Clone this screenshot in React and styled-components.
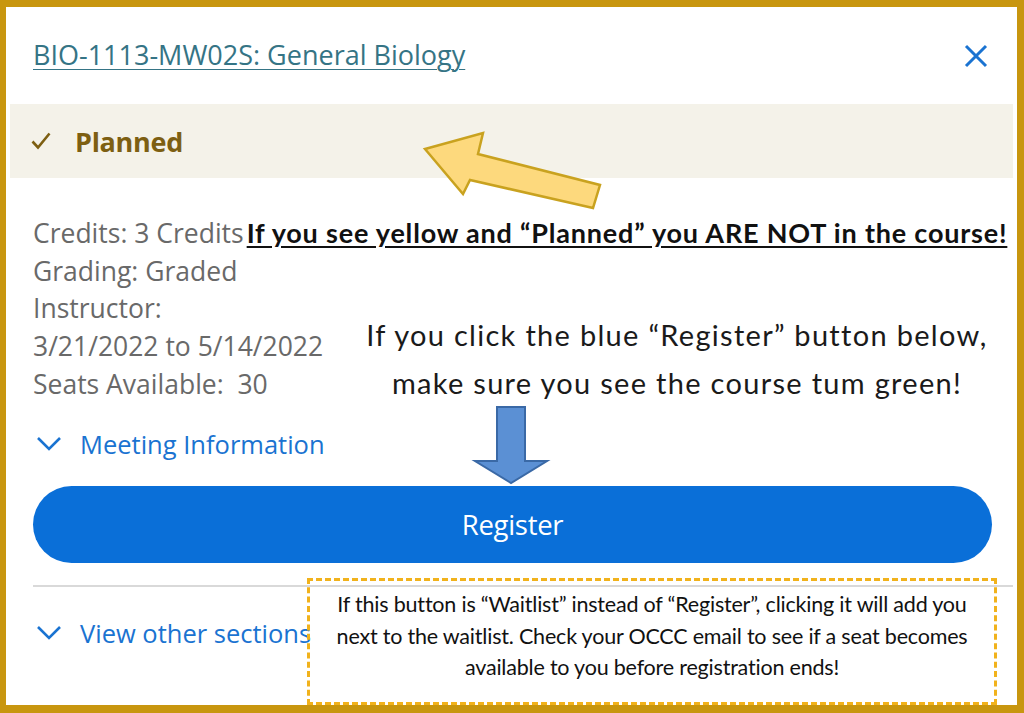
import React from 'react';
import styled, { createGlobalStyle } from 'styled-components';

const GlobalStyle = createGlobalStyle`
  * { box-sizing: border-box; }
  html, body { margin: 0; padding: 0; background: #ffffff; }
  body { font-family: 'Open Sans', 'Liberation Sans', sans-serif; }
`;

const gold = '#c8960f';
const blue = '#1a73d1';

const Frame = styled.div`
  position: relative;
  width: 1024px;
  height: 713px;
  border-style: solid;
  border-color: ${gold};
  border-width: 7px 7px 8px 6px;
  background: #ffffff;
  display: flex;
  flex-direction: column;
  overflow: hidden;
`;

const Header = styled.div`
  height: 97px;
  display: flex;
  align-items: center;
  justify-content: space-between;
  padding: 0 28px 0 27px;
`;

const Title = styled.a`
  font-size: 27px;
  color: #357485;
  text-decoration: underline;
  text-underline-offset: 4px;
  text-decoration-thickness: 1px;
  margin-top: -2px;
`;

const CloseButton = styled.button`
  border: none;
  background: none;
  padding: 0;
  width: 26px;
  height: 26px;
  display: flex;
  align-items: center;
  justify-content: center;
`;

const StatusBand = styled.div`
  height: 74px;
  margin: 0 4px;
  background: #f4f2e9;
  display: flex;
  align-items: center;
  gap: 24px;
  padding-left: 21px;
  color: #7d5f12;
  font-weight: 700;
  font-size: 27px;
  letter-spacing: -0.3px;
`;

const Details = styled.div`
  padding: 36px 0 0 27px;
  color: #696969;
  font-size: 26.5px;
  line-height: 37.7px;
`;

const InfoLine = styled.div`
  white-space: nowrap;
`;

const Warning = styled.span`
  font-family: 'Lato', 'Liberation Sans', sans-serif;
  font-weight: 700;
  color: #111111;
  font-size: 27px;
  letter-spacing: 0.8px;
  text-decoration: underline;
  text-underline-offset: 3px;
  margin-left: 3px;
`;

const InfoRow = styled.div`
  display: flex;
`;

const InfoColumn = styled.div`
  width: 320px;
  flex-shrink: 0;
`;

const Hint = styled.div`
  flex: 1;
  padding: 58px 16px 0 0;
  font-family: 'Lato', 'Liberation Sans', sans-serif;
  font-size: 29px;
  line-height: 48px;
  letter-spacing: 1.3px;
  color: #1a1a1a;
  text-align: center;
  white-space: nowrap;
`;

const Toggle = styled.div`
  display: flex;
  align-items: center;
  gap: 18px;
  color: ${blue};
  font-size: 25.5px;
  white-space: nowrap;
  padding-left: 3px;
  margin-top: ${(p) => p.$top}px;
`;

const RegisterButton = styled.button`
  margin: 23px 25px 0 27px;
  height: 77px;
  flex-shrink: 0;
  border: none;
  border-radius: 40px;
  background: #0a6fd8;
  color: #ffffff;
  font-family: 'Open Sans', 'Liberation Sans', sans-serif;
  font-size: 27.5px;
  letter-spacing: -0.3px;
  font-weight: 500;
`;

const Divider = styled.div`
  margin: 22px 4px 0 27px;
  height: 2px;
  flex-shrink: 0;
  background: #d9d9d9;
`;

const Footer = styled.div`
  padding: 29px 0 0 27px;
`;

const Note = styled.div`
  position: absolute;
  left: 301px;
  top: 571px;
  width: 690px;
  height: 127px;
  border: 3px dashed #f1b21c;
  padding-top: 8px;
  font-family: 'Lato', 'Liberation Sans', sans-serif;
  font-size: 21.5px;
  line-height: 31.5px;
  letter-spacing: -0.2px;
  color: #111111;
  text-align: center;
  white-space: nowrap;
`;

const Overlay = styled.svg`
  position: absolute;
  left: -6px;
  top: -7px;
  pointer-events: none;
`;

const Chevron = () => (
  <svg width="26" height="16" viewBox="0 0 26 16">
    <path d="M2 2 L13 13 L24 2" fill="none" stroke={blue} strokeWidth="2.6" />
  </svg>
);

export default function App() {
  return (
    <>
      <GlobalStyle />
      <Frame>
        <Header>
          <Title>BIO-1113-MW02S: General Biology</Title>
          <CloseButton aria-label="Close">
            <svg width="24" height="24" viewBox="0 0 24 24">
              <path d="M2 2 L22 22 M22 2 L2 22" stroke={blue} strokeWidth="3" />
            </svg>
          </CloseButton>
        </Header>
        <StatusBand>
          <svg width="20" height="18" viewBox="0 0 20 18">
            <path d="M1.5 9.5 L7 15.5 L18.5 1.5" fill="none" stroke="#7d5f12" strokeWidth="2.6" />
          </svg>
          Planned
        </StatusBand>
        <Details>
          <InfoLine>
            Credits: 3 Credits
            <Warning>If you see yellow and “Planned” you ARE NOT in the course!</Warning>
          </InfoLine>
          <InfoRow>
            <InfoColumn>
              <InfoLine>Grading: Graded</InfoLine>
              <InfoLine>Instructor:</InfoLine>
              <InfoLine>3/21/2022 to 5/14/2022</InfoLine>
              <InfoLine>Seats Available:&nbsp; 30</InfoLine>
              <Toggle $top={22}>
                <Chevron />
                Meeting Information
              </Toggle>
            </InfoColumn>
            <Hint>
              If you click the blue “Register” button below,
              <br />
              make sure you see the course tum green!
            </Hint>
          </InfoRow>
        </Details>
        <RegisterButton>Register</RegisterButton>
        <Divider />
        <Footer>
          <Toggle $top={0}>
            <Chevron />
            View other sections
          </Toggle>
        </Footer>
        <Note>
          If this button is “Waitlist” instead of “Register”, clicking it will add you
          <br />
          next to the waitlist. Check your OCCC email to see if a seat becomes
          <br />
          available to you before registration ends!
        </Note>
        <Overlay width="1024" height="713" viewBox="0 0 1024 713">
          <path
            d="M425 149 L483 133 L478 154 L600 185 L593 208 L470 180 L463 194 Z"
            fill="#fdd97d"
            stroke="#c9a21f"
            strokeWidth="2.5"
            strokeLinejoin="miter"
          />
          <path
            d="M497 407 L525 407 L525 461 L547 461 L511 483 L475 461 L497 461 Z"
            fill="#5b90d4"
            stroke="#3a69a6"
            strokeWidth="2"
          />
        </Overlay>
      </Frame>
    </>
  );
}
